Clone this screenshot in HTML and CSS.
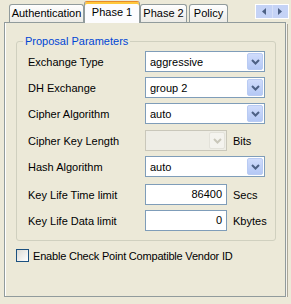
FILE: index.html
```html
<!DOCTYPE html>
<html lang="en">
<head>
	<meta charset="UTF-8">
	<title>Phase 1</title>
	<link rel="stylesheet" href="styles.css">
</head>
<body>
	<div class="tabstrip">
		<div class="tab tab-auth">Authentication</div>
		<div class="tab tab-phase1 active">Phase 1</div>
		<div class="tab tab-phase2">Phase 2</div>
		<div class="tab tab-policy">Policy</div>
		<div class="scroller">
			<span class="scroll-btn">
				<svg width="4" height="7" viewBox="0 0 4 7"><path d="M4 0 L0 3.5 L4 7 Z" fill="#4d6185"/></svg>
			</span>
			<span class="scroll-btn">
				<svg width="4" height="7" viewBox="0 0 4 7"><path d="M0 0 L4 3.5 L0 7 Z" fill="#4d6185"/></svg>
			</span>
		</div>
	</div>

	<div class="panel">
		<fieldset class="group">
			<legend>Proposal Parameters</legend>

			<div class="row">
				<span class="label">Exchange Type</span>
				<div class="combo wide"><span class="value">aggressive</span><span class="drop"><svg width="9" height="6" viewBox="0 0 9 6"><path d="M1 1 L4.5 4.5 L8 1" fill="none" stroke="#4d6185" stroke-width="2"/></svg></span></div>
			</div>
			<div class="row">
				<span class="label">DH Exchange</span>
				<div class="combo wide"><span class="value">group 2</span><span class="drop"><svg width="9" height="6" viewBox="0 0 9 6"><path d="M1 1 L4.5 4.5 L8 1" fill="none" stroke="#4d6185" stroke-width="2"/></svg></span></div>
			</div>
			<div class="row">
				<span class="label">Cipher Algorithm</span>
				<div class="combo wide"><span class="value">auto</span><span class="drop"><svg width="9" height="6" viewBox="0 0 9 6"><path d="M1 1 L4.5 4.5 L8 1" fill="none" stroke="#4d6185" stroke-width="2"/></svg></span></div>
			</div>
			<div class="row row-gap1">
				<span class="label">Cipher Key Length</span>
				<div class="combo narrow disabled"><span class="value"></span><span class="drop"><svg width="9" height="6" viewBox="0 0 9 6"><path d="M1 1 L4.5 4.5 L8 1" fill="none" stroke="#c9c7ba" stroke-width="2"/></svg></span></div>
				<span class="unit">Bits</span>
			</div>
			<div class="row">
				<span class="label">Hash Algorithm</span>
				<div class="combo wide"><span class="value">auto</span><span class="drop"><svg width="9" height="6" viewBox="0 0 9 6"><path d="M1 1 L4.5 4.5 L8 1" fill="none" stroke="#4d6185" stroke-width="2"/></svg></span></div>
			</div>
			<div class="row row-gap2">
				<span class="label">Key Life Time limit</span>
				<div class="field">86400</div>
				<span class="unit">Secs</span>
			</div>
			<div class="row">
				<span class="label">Key Life Data limit</span>
				<div class="field">0</div>
				<span class="unit">Kbytes</span>
			</div>
		</fieldset>

		<div class="check">
			<span class="checkbox"></span>
			<span class="check-label">Enable Check Point Compatible Vendor ID</span>
		</div>
	</div>
</body>
</html>
```

FILE: styles.css
```css
* {
	box-sizing: border-box;
}
html,
body {
	margin: 0;
	background: #ece9d8;
	font: 11px "Liberation Sans", Arial, sans-serif;
	color: #000;
}

/* tab strip */
.tabstrip {
	display: flex;
	align-items: flex-end;
	gap: 2px;
	height: 22px;
	padding-left: 9px;
}
.tab {
	height: 18px;
	line-height: 16px;
	text-align: center;
	border: 1px solid #919b9c;
	border-bottom: 0;
	border-radius: 3px 3px 0 0;
	background: linear-gradient(#fefefe, #ecebe6);
}
.tab-auth { width: 75px; }
.tab-phase1 { width: 56px; }
.tab-phase2 { width: 47px; }
.tab-policy { width: 39px; }

.tab.active {
	position: relative;
	z-index: 1;
	height: 22px;
	margin: 0 -2px -1px;
	border-top: 1px solid #e68b2c;
	box-shadow: inset 0 2px 0 #ffc83c;
	padding-top: 2px;
	background: #fcfcfe;
}

.scroller {
	align-self: flex-start;
	display: flex;
	margin: 4px 2px 0 auto;
	width: 34px;
	height: 15px;
	border: 1px solid #fff;
	background: #c5d3f6;
}
.scroll-btn {
	flex: 1;
	display: flex;
	align-items: center;
	justify-content: center;
}
.scroll-btn + .scroll-btn {
	border-left: 1px solid #d6e0f8;
}

/* page */
.panel {
	margin-left: 4px;
	width: 282px;
	height: 275px;
	padding: 12px 9px 0 11px;
	border: 1px solid #919b9c;
	box-shadow: inset 1px 0 0 #fff, 1px 1px 0 #f4f3ee, 2px 2px 0 #aca899;
}

.group {
	margin: 0;
	min-width: 0;
	padding: 3px 0 9px 11px;
	border: 1px solid #d0d0bf;
	border-radius: 3px;
}
.group legend {
	margin-left: -5px;
	padding: 0 2px;
	line-height: 13px;
	color: #0046d5;
}

.row {
	display: flex;
	align-items: center;
	height: 21px;
}
.row + .row {
	margin-top: 5px;
}
.row.row-gap1 {
	margin-top: 6px;
}
.row.row-gap2 {
	margin-top: 7px;
}
.label {
	width: 117px;
}
.unit {
	margin-left: 6px;
}

.combo {
	display: flex;
	align-items: center;
	height: 21px;
	border: 1px solid #7f9db9;
	background: #fff;
}
.combo.wide { width: 120px; }
.combo.narrow { width: 82px; }
.combo .value {
	flex: 1;
	padding-left: 4px;
}
.drop {
	display: flex;
	align-items: center;
	justify-content: center;
	width: 16px;
	height: 17px;
	margin-right: 1px;
	border: 1px solid #b9cbf3;
	border-radius: 2px;
	background: linear-gradient(#d0dcfb, #b4c8f5);
}
.combo.disabled {
	border-color: #c9c7ba;
	background: #eeede5;
}
.combo.disabled .drop {
	border-color: #e3e2da;
	background: #f4f3ee;
}

.field {
	width: 82px;
	height: 21px;
	line-height: 19px;
	padding-right: 4px;
	text-align: right;
	border: 1px solid #7f9db9;
	background: #fff;
}

.check {
	display: flex;
	align-items: center;
	gap: 4px;
	margin-top: 8px;
}
.check-label {
	letter-spacing: -0.2px;
}
.checkbox {
	width: 13px;
	height: 13px;
	border: 1px solid #1c5180;
	background: linear-gradient(135deg, #dcdbd5, #fff);
}
```
